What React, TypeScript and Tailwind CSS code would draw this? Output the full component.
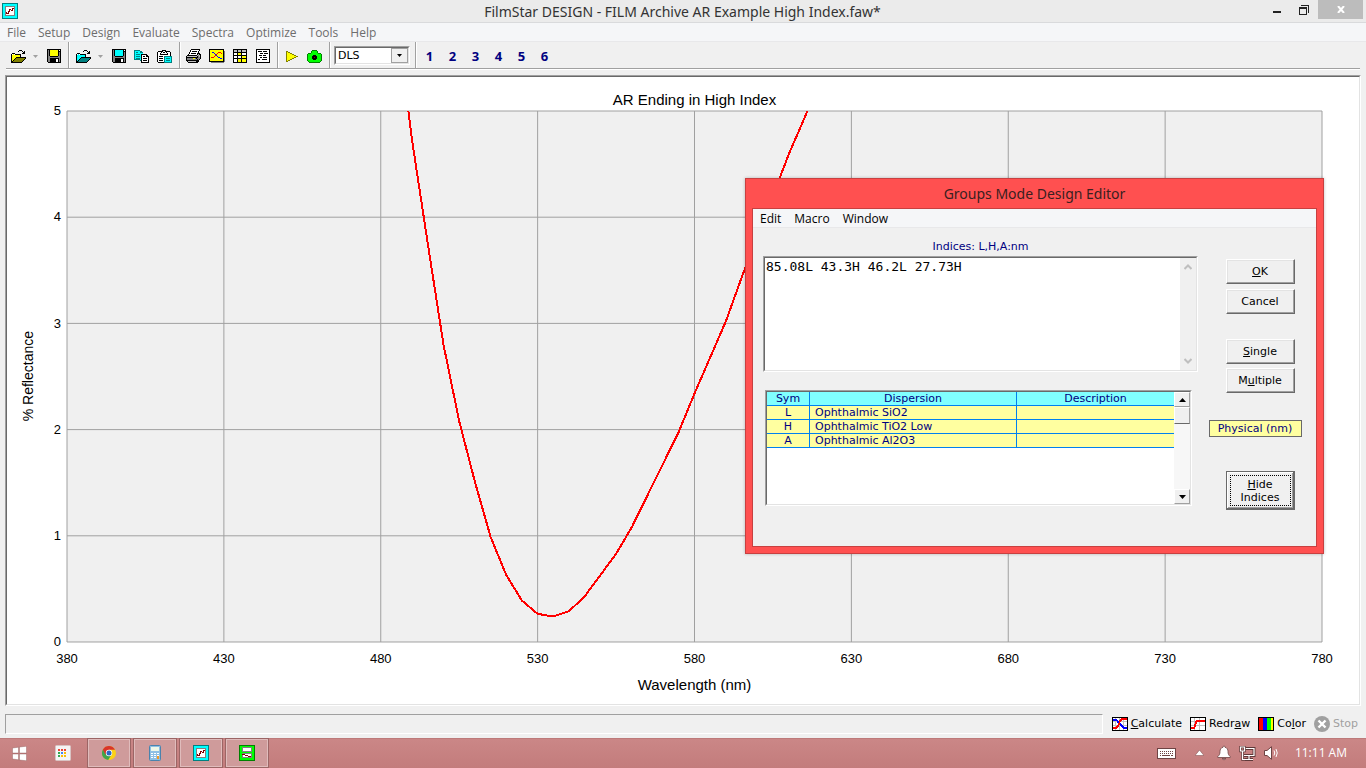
import React from "react";

type Palette = Record<string, string>;

const COLORS: Palette = {
  k: "#000000",
  w: "#ffffff",
  y: "#ffff00",
  d: "#808000",
  g: "#808080",
  l: "#c0c0c0",
  c: "#00ffff",
  t: "#008080",
  G: "#00ff00",
  D: "#008000",
  b: "#0000ff",
  r: "#ff0000",
  m: "#800000",
};

// y = main colour, d = shade of it; the teal set swaps both
const TEAL: Palette = { ...COLORS, y: "#00ffff", d: "#008080" };

const FOLDER = [
  ".........kkk....",
  "........k...k.k.",
  ".............kk.",
  "..kkk.......kkk.",
  ".kwywkkkkkk.....",
  ".kyyyyyyyyk.....",
  ".kyyyyyyyyk.....",
  ".kyyyykkkkkkkkkk",
  ".kyyykdddddddddk",
  ".kyykdddddddddk.",
  ".kykdddddddddk..",
  ".kkdddddddddk...",
  ".kkkkkkkkkkk....",
];

const FLOPPY = [
  "kkkkkkkkkkkkkk",
  "kgkyyyyyyyykwk",
  "kgkyyyyyyyykkk",
  "kgkyyyyyyyykgk",
  "kgkyyyyyyyykgk",
  "kgkyyyyyyyykgk",
  "kgkyyyyyyyykgk",
  "kggkkkkkkkkggk",
  "kggggggggggggk",
  "kggkkkkkkkkkgk",
  "kggkkkkkkwwkgk",
  "kggkkkkkkwwkgk",
  "kggkkkkkkwwkgk",
  ".kkkkkkkkkkkkk",
];

const COPY = [
  "tttttt.........",
  "tccccctt.......",
  "tcttccttt......",
  "tcccccccc......",
  "tcttttckkkkkk..",
  "tcccccckwwwwkk.",
  "tcttttckwkkwkkk",
  "tcccccckwwwwwwk",
  "tcttttckwkkkkwk",
  "ttttttckwwwwwwk",
  "......tkwkkkkwk",
  ".......kwwwwwwk",
  ".......kkkkkkkk",
];

const PASTE = [
  ".....kkkk......",
  ".kkkkkwwkkkkk..",
  "kwwwkwkkwkwwwk.",
  "kwwkwwwwwwkwwk.",
  "kwwkkkkkkkkwwk.",
  "kwwwwwwwwwwwwk.",
  "kwkkkkwtttttttt",
  "kwwwwwwtcccccct",
  "kwkkkkwtcttttct",
  "kwwwwwwtcccccct",
  "kwkkkkwtcttttct",
  "kwwwwwwtcccccct",
  ".kkkkkktttttttt",
];

const PRINTER = [
  ".....kkkkkkkkk.",
  "....kwwwwwwwwk.",
  "....kwkkkkkwk..",
  "...kwwwwwwwwk..",
  "...kwkkkkkwkkk.",
  "..kwwwwwwwwklkk",
  ".kkkkkkkkkklglk",
  "kllllllllllkglk",
  "kkkkkkkkkkkkggk",
  "kggggggyygkgggk",
  "kggggggggggkgk.",
  "kkkkkkkkkkkkk..",
  ".kllllllllkkk..",
  "..kkkkkkkkkk...",
];

const PLOT = [
  "kkkkkkkkkkkkkkk.",
  "kyyyyyyyyyyyyyk.",
  "kyyyyyyyyyyyyykg",
  "kyybbyyyyrrryykg",
  "kyyyybyyryyyrykg",
  "kyyyyybryyyyyykg",
  "kyyyyyrbyyyyyykg",
  "kyyyyryybyyyyykg",
  "kyrrryyyybbyyykg",
  "kyyyyyyyyyybbykg",
  "kyyyyyyyyyyyyykg",
  "kyyyyyyyyyyyyykg",
  "kkkkkkkkkkkkkkkg",
  "..ggggggggggggg.",
];

const GRID = [
  "kkkkkkkkkkkkkk",
  "klllklllkllllk",
  "klllklllkllllk",
  "kkkkkkkkkkkkkk",
  "kwwwkyyykwwwwk",
  "kwwwkyyykwwwwk",
  "kkkkkkkkkkkkkk",
  "kwwwkwwwkyyyyk",
  "kwwwkwwwkyyyyk",
  "kkkkkkkkkkkkkk",
  "kwwwkyyykyyyyk",
  "kwwwkyyykyyyyk",
  "kwwwkyyykyyyyk",
  "kkkkkkkkkkkkkk",
];

const REPORT = [
  "kkkkkkkkkkkkkk",
  "kwwwwwwwwwwwwk",
  "kwkkkkwkkkkwwk",
  "kwwwwwwwwwwwwk",
  "kwwwkkkwkkkkwk",
  "kwwwwwwwwwwwwk",
  "kwwkkkwkkkwwwk",
  "kwwwwwwwwwwwwk",
  "kwwwkkwkkkkwwk",
  "kwwwwwwwwwwwwk",
  "kwkkwwkkkkkwwk",
  "kwwwwwwwwwwwwk",
  "kwwwwwwwwwwwwk",
  "kkkkkkkkkkkkkk",
];

const PLAY = [
  "dd..........",
  "dydd........",
  "dyyydd......",
  "dyyyyydd....",
  "dyyyyyyydd..",
  "dyyyyyyyyydd",
  "dyyyyyyydd..",
  "dyyyyydd....",
  "dyyydd......",
  "dydd........",
  "dd..........",
];

const CAMERA = [
  ".....DDDDD.....",
  "....DGGGGGD....",
  "....DGGGGGD....",
  ".DDDGGGGGGGDDD.",
  "DGGGGGGGGGGGGGD",
  "DGGGGGkkkGGGGGD",
  "DGGGGkkkkkGGGGD",
  "DGGGGkkmkkGGGGD",
  "DGGGGkkkkkGGGGD",
  "DGGGGGkkkGGGGGD",
  "DGGGGGGGGGGGGGD",
  ".DGGGGGGGGGGGD.",
  "..DDDDDDDDDDD..",
];

const APP = [
  "tttttttttttttttt",
  "tcccccccccccccct",
  "tcccccccccccccct",
  "tccggggggggggcct",
  "tccgwwwwwwwwgcct",
  "tccgwwwwwwmmgcct",
  "tccgwwwmmwmwgcct",
  "tccgwwwmwmmwgcct",
  "tccgwwmmwwwwgcct",
  "tccgmwmwwwwwgcct",
  "tccgmmmwwwwwgcct",
  "tccgwwwwwwwwgcct",
  "tccggggggggggcct",
  "tcccccccccccccct",
  "tcccccccccccccct",
  "tttttttttttttttt",
];

const SPLIT_APP = [
  "DDDDDDDDDDDDDDDD",
  "DGGGGGGGGGGGGGGD",
  "DGGggggggggggGGD",
  "DGGgwwwwwwwwgGGD",
  "DGGgwwwwwwwwgGGD",
  "DGGgwwwwwwwwgGGD",
  "DGGggggggggggGGD",
  "DGGGGGGGGGGGGGGD",
  "DGGggggggggggGGD",
  "DGGmmmwwwwwwgGGD",
  "DGGgwwmmmwwwgGGD",
  "DGGgwwwwwmmmgGGD",
  "DGGggggggggggGGD",
  "DGGGGGGGGGGGGGGD",
  "DGGGGGGGGGGGGGGD",
  "DDDDDDDDDDDDDDDD",
];

const CALCULATE = [
  "kkkkkkkkkkkkkkkk",
  "kwwlwwwlwrrrrrrk",
  "kbbbbwwlrrrrrrrk",
  "kbbbbbwrrrwlwwwk",
  "kllllbbrrllllllk",
  "kwwlwbbrwwwlwwwk",
  "kwwlwwrrbwwlwwwk",
  "kwwlwwrrbbwlwwwk",
  "kllllrrlbbbllllk",
  "kwwlrrrlwbbbwwwk",
  "krrrrrwlwwbbbbbk",
  "krrrrwwlwwwbbbbk",
  "kwwlwwwlwwwlwwwk",
  "kkkkkkkkkkkkkkkk",
];

const REDRAW = [
  "kkkkkkkkkkkkkkkk",
  "kwwwlwwwwlwwwwwk",
  "kwwwlwwwwlwwwwwk",
  "kwwwlwrrrrrrrrrk",
  "kllllrrrrrrrrrrk",
  "kwwwlrrwwlwwwwwk",
  "kwwwlrrwwlwwwwwk",
  "kwwwrrwwwlwwwwwk",
  "klllrrlllllllllk",
  "kwwwrrwwwlwwwwwk",
  "krrrrwwwwlwwwwwk",
  "krrrrwwwwlwwwwwk",
  "kwwwlwwwwlwwwwwk",
  "kkkkkkkkkkkkkkkk",
];

const COLOR_BARS = [
  "kkkkkkkkkkkkkkkk",
  ...Array(12).fill("krrrrbbbbGGGGyyk"),
  "kkkkkkkkkkkkkkkk",
];

function PixelIcon({ rows, palette = COLORS }: { rows: string[]; palette?: Palette }) {
  const width = rows[0].length;
  return (
    <svg
      width={width}
      height={rows.length}
      viewBox={`0 0 ${width} ${rows.length}`}
      shapeRendering="crispEdges"
      className="shrink-0"
      aria-hidden="true"
    >
      {rows.flatMap((row, y) =>
        [...row].map((ch, x) =>
          ch === "." ? null : (
            <rect key={`${x}-${y}`} x={x} y={y} width={1} height={1} fill={palette[ch]} />
          )
        )
      )}
    </svg>
  );
}

function Triangle({ up = false, small = false }: { up?: boolean; small?: boolean }) {
  return (
    <svg width={small ? 5 : 7} height={small ? 3 : 4} viewBox="0 0 8 4" preserveAspectRatio="none" aria-hidden="true">
      <path d={up ? "M0 4L4 0L8 4Z" : "M0 0L4 4L8 0Z"} fill="currentColor" />
    </svg>
  );
}

function TitleBar() {
  return (
    <header className="flex h-[23px] items-start border-b border-[#d9dadc] bg-[#ebebeb]">
      <div className="flex flex-1 pl-[2px] pt-[3px]">
        <PixelIcon rows={APP} />
      </div>
      <h1 className="font-['Noto_Sans',sans-serif] text-sm leading-6 text-[#333]">
        FilmStar DESIGN - FILM Archive AR Example High Index.faw*
      </h1>
      <div className="flex flex-1 justify-end pr-[3px]">
        <button aria-label="Minimize" className="flex h-[19px] w-[26px] items-center justify-center">
          <svg width="8" height="6" viewBox="0 0 8 6">
            <path d="M0 4h8v2H0z" fill="#222" />
          </svg>
        </button>
        <button aria-label="Restore" className="flex h-[19px] w-[28px] items-center justify-center">
          <svg width="10" height="10" viewBox="0 0 10 10" shapeRendering="crispEdges">
            <path d="M2 0h8v8H9V1H2zM0 2h8v8H0zM1 4v5h6V4z" fill="#222" fillRule="evenodd" />
          </svg>
        </button>
        <button aria-label="Close" className="flex h-[19px] w-[45px] items-center justify-center bg-[#bcbcbc]">
          <svg width="8" height="7" viewBox="0 0 8 7">
            <path d="M1 0l6 7M7 0L1 7" stroke="#fff" strokeWidth="2" />
          </svg>
        </button>
      </div>
    </header>
  );
}

const MENUS = ["File", "Setup", "Design", "Evaluate", "Spectra", "Optimize", "Tools", "Help"];

function MenuBar() {
  return (
    <nav className="flex h-[19px] items-center gap-3 border-b border-[#e8e8ea] bg-[#f5f6f8] pl-[7px] pt-[2px] text-xs text-[#6d6d6d]">
      {MENUS.map((item) => (
        <button key={item}>{item}</button>
      ))}
    </nav>
  );
}

function ToolButton({ label, children }: { label: string; children: React.ReactNode }) {
  return (
    <button aria-label={label} className="flex h-[26px] w-[23px] items-center justify-center pt-[2px]">
      {children}
    </button>
  );
}

function DropArrow() {
  return (
    <button aria-label="More" className="flex h-[26px] w-[13px] items-center justify-center pt-[2px] text-[#a0a0a0]">
      <Triangle small />
    </button>
  );
}

function Separator() {
  return <div className="ml-[3px] mr-px h-[26px] w-[2px] border-l border-r border-l-[#a0a0a0] border-r-white" />;
}

function Toolbar() {
  return (
    <div className="mx-[6px] flex items-center border-b border-[#a0a0a0] shadow-[0_1px_0_#fff]">
      <ToolButton label="Open">
        <PixelIcon rows={FOLDER} />
      </ToolButton>
      <DropArrow />
      <ToolButton label="Save">
        <PixelIcon rows={FLOPPY} />
      </ToolButton>
      <Separator />
      <ToolButton label="Open index">
        <PixelIcon rows={FOLDER} palette={TEAL} />
      </ToolButton>
      <DropArrow />
      <ToolButton label="Save index">
        <PixelIcon rows={FLOPPY} palette={TEAL} />
      </ToolButton>
      <ToolButton label="Copy">
        <PixelIcon rows={COPY} />
      </ToolButton>
      <ToolButton label="Paste">
        <PixelIcon rows={PASTE} />
      </ToolButton>
      <Separator />
      <ToolButton label="Print">
        <PixelIcon rows={PRINTER} />
      </ToolButton>
      <ToolButton label="Plot">
        <PixelIcon rows={PLOT} />
      </ToolButton>
      <ToolButton label="Table">
        <PixelIcon rows={GRID} />
      </ToolButton>
      <ToolButton label="Report">
        <PixelIcon rows={REPORT} />
      </ToolButton>
      <Separator />
      <ToolButton label="Run">
        <PixelIcon rows={PLAY} />
      </ToolButton>
      <ToolButton label="Capture">
        <PixelIcon rows={CAMERA} />
      </ToolButton>
      <Separator />
      <div className="relative mx-[2px] mt-px h-[19px] w-[76px] border border-b-white border-l-[#a0a0a0] border-r-white border-t-[#a0a0a0]">
        <select
          aria-label="Optimizer"
          className="block h-full w-full appearance-none border border-b-[#e3e3e3] border-l-[#696969] border-r-[#e3e3e3] border-t-[#696969] bg-white pl-[2px] font-['DejaVu_Sans',sans-serif] text-[11px] leading-[15px] text-black"
        >
          <option>DLS</option>
        </select>
        <span className="pointer-events-none absolute right-px top-px flex h-[15px] w-[17px] items-center justify-center border border-[#a0a0a0] bg-[#f0f0f0]">
          <Triangle small />
        </span>
      </div>
      <Separator />
      {[1, 2, 3, 4, 5, 6].map((n) => (
        <button
          key={n}
          className="h-[26px] w-[23px] pt-[2px] font-['Noto_Sans',sans-serif] text-[13px] font-bold leading-none text-[#000080]"
        >
          {n}
        </button>
      ))}
    </div>
  );
}

// [wavelength nm, % reflectance]
const REFLECTANCE = [
  [488.8, 5], [490, 4.72], [495, 3.75], [500, 2.8], [505, 2.08], [510, 1.51], [515, 0.99],
  [520, 0.63], [525, 0.39], [530, 0.265], [535, 0.24], [540, 0.29], [545, 0.43], [550, 0.63],
  [555, 0.83], [560, 1.08], [565, 1.38], [570, 1.68], [575, 1.98], [580, 2.34], [585, 2.68],
  [590, 3.02], [595, 3.43], [600, 3.83], [605, 4.2], [610, 4.59], [615, 4.93], [616, 5],
];

const X_TICKS = [380, 430, 480, 530, 580, 630, 680, 730, 780];
const Y_TICKS = [5, 4, 3, 2, 1, 0];

function Chart() {
  const curve = REFLECTANCE.map(([nm, r]) => `${nm - 380},${5 - r}`).join(" ");
  return (
    <figure className="flex flex-1 flex-col pr-[37px] font-['Liberation_Sans',Arial,sans-serif] text-black">
      <figcaption className="flex h-[34px] items-center justify-center pl-[60px] pt-3 text-[15px]">
        AR Ending in High Index
      </figcaption>
      <div className="flex flex-1">
        <div className="flex w-[42px] items-center justify-center">
          <span className="rotate-180 text-sm [writing-mode:vertical-rl]">% Reflectance</span>
        </div>
        <div className="flex w-[18px] flex-col justify-between pr-[6px] text-[13px]">
          {Y_TICKS.map((tick) => (
            <div key={tick} className="flex h-0 items-center justify-end">
              {tick}
            </div>
          ))}
        </div>
        <div className="flex flex-1 flex-col">
          <svg
            className="block h-0 min-h-full w-full overflow-visible bg-[#f0f0f0]"
            viewBox="0 0 400 5"
            preserveAspectRatio="none"
          >
            <g stroke="#a0a0a0" shapeRendering="crispEdges">
              {X_TICKS.map((nm) => (
                <line key={nm} x1={nm - 380} x2={nm - 380} y1={0} y2={5} vectorEffect="non-scaling-stroke" />
              ))}
              {Y_TICKS.map((r) => (
                <line key={r} x1={0} x2={400} y1={r} y2={r} vectorEffect="non-scaling-stroke" />
              ))}
            </g>
            <polyline
              points={curve}
              fill="none"
              stroke="#ff0000"
              strokeWidth={2}
              shapeRendering="crispEdges"
              vectorEffect="non-scaling-stroke"
            />
          </svg>
        </div>
      </div>
      <div className="flex h-[33px] justify-between pl-[60px] text-[13px]">
        {X_TICKS.map((nm) => (
          <div key={nm} className="flex w-0 items-center justify-center">
            {nm}
          </div>
        ))}
      </div>
      <div className="h-[29px] pl-[60px] text-center text-[15px] leading-5">Wavelength (nm)</div>
    </figure>
  );
}

function DialogButton({ children, className = "" }: { children: React.ReactNode; className?: string }) {
  return (
    <button
      className={`h-[25px] w-[69px] border border-b-[#696969] border-l-white border-r-[#696969] border-t-white bg-[#f0f0f0] pt-[2px] shadow-[inset_-1px_-1px_0_#a0a0a0,inset_1px_1px_0_#e3e3e3] ${className}`}
    >
      {children}
    </button>
  );
}

function ScrollButton({ up = false }: { up?: boolean }) {
  return (
    <button
      aria-label={up ? "Scroll up" : "Scroll down"}
      className="flex h-[15px] w-full items-center justify-center border border-b-[#a0a0a0] border-l-white border-r-[#a0a0a0] border-t-white bg-[#f0f0f0]"
    >
      <Triangle up={up} />
    </button>
  );
}

function Chevron({ up = false }: { up?: boolean }) {
  return (
    <svg width="8" height="6" viewBox="0 0 8 6" aria-hidden="true">
      <path d={up ? "M0.5 5L4 1.5L7.5 5" : "M0.5 1L4 4.5L7.5 1"} fill="none" stroke="#bfbfbf" strokeWidth="2" />
    </svg>
  );
}

const MATERIALS = [
  { sym: "L", dispersion: "Ophthalmic SiO2", description: "" },
  { sym: "H", dispersion: "Ophthalmic TiO2 Low", description: "" },
  { sym: "A", dispersion: "Ophthalmic Al2O3", description: "" },
];

function IndexTable() {
  return (
    <div className="ml-[2px] mt-[18px] flex h-[116px] w-[427px] border border-b-white border-l-[#a0a0a0] border-r-white border-t-[#a0a0a0] bg-white">
      <div className="flex flex-1 border border-b-[#e3e3e3] border-l-[#696969] border-r-[#e3e3e3] border-t-[#696969]">
        <div className="flex-1">
          <table className="w-full table-fixed border-separate border-spacing-0 leading-[13px] text-[#000080]">
            <thead>
              <tr className="h-[14px] bg-[#80ffff]">
                <th className="w-[43px] border-b border-r border-[#0080f0] p-0 font-normal">Sym</th>
                <th className="w-[207px] border-b border-r border-[#0080f0] p-0 font-normal">Dispersion</th>
                <th className="border-b border-[#0080f0] p-0 font-normal">Description</th>
              </tr>
            </thead>
            <tbody>
              {MATERIALS.map((row) => (
                <tr key={row.sym} className="h-[14px] bg-[#ffffa0]">
                  <td className="border-b border-r border-[#0080f0] p-0 text-center">{row.sym}</td>
                  <td className="border-b border-r border-[#0080f0] py-0 pl-[5px] pr-0">{row.dispersion}</td>
                  <td className="border-b border-[#0080f0] p-0">{row.description}</td>
                </tr>
              ))}
            </tbody>
          </table>
        </div>
        <div className="flex w-[16px] flex-col bg-[#f7f7f7]">
          <ScrollButton up />
          <div className="h-[17px] border border-b-[#696969] border-l-white border-r-[#a0a0a0] border-t-white bg-[#f0f0f0]" />
          <div className="flex-1" />
          <ScrollButton />
        </div>
      </div>
    </div>
  );
}

function DesignEditor() {
  return (
    <section
      role="dialog"
      aria-labelledby="editor-title"
      className="absolute right-[42px] top-[178px] flex h-[376px] w-[579px] flex-col border border-[#c84040] bg-[#ff5050] px-[6px] pb-[6px] shadow-[0_0_3px_rgba(0,0,0,0.25)]"
    >
      <h2
        id="editor-title"
        className="h-[29px] text-center font-['Noto_Sans',sans-serif] text-sm leading-[30px] text-[#3a2020]"
      >
        Groups Mode Design Editor
      </h2>
      <div className="flex flex-1 flex-col border border-[#c84040] bg-[#f0f0f0]">
        <nav className="flex h-[19px] items-center gap-[13px] border-b border-[#e8e8ea] bg-[#f5f6f8] pl-[7px] pt-[2px] text-xs text-black">
          <button>Edit</button>
          <button>Macro</button>
          <button>Window</button>
        </nav>
        <div className="flex flex-1 pl-[10px] font-['DejaVu_Sans',Verdana,sans-serif] text-[11px] text-black">
          <div className="w-[435px]">
            <label htmlFor="design" className="block h-[28px] pt-[11px] text-center leading-4 text-[#000080]">
              Indices: L,H,A:nm
            </label>
            <div className="flex h-[116px] border border-b-white border-l-[#a0a0a0] border-r-white border-t-[#a0a0a0]">
              <div className="flex flex-1 border border-b-[#e3e3e3] border-l-[#696969] border-r-[#e3e3e3] border-t-[#696969] bg-white">
                <textarea
                  id="design"
                  spellCheck={false}
                  defaultValue="85.08L 43.3H 46.2L 27.73H"
                  className="flex-1 resize-none overflow-hidden pl-px pt-px font-['DejaVu_Sans_Mono',monospace] text-[13px] leading-4 outline-none"
                />
                <div className="flex w-[16px] flex-col items-center justify-between bg-[#f0f0f0] py-[6px]">
                  <Chevron up />
                  <Chevron />
                </div>
              </div>
            </div>
            <IndexTable />
          </div>
          <div className="flex flex-1 flex-col items-center pl-[6px] pt-[31px]">
            <DialogButton>
              <u>O</u>K
            </DialogButton>
            <DialogButton className="mt-[5px]">Cancel</DialogButton>
            <DialogButton className="mt-[25px]">
              <u>S</u>ingle
            </DialogButton>
            <DialogButton className="mt-[4px]">
              M<u>u</u>ltiple
            </DialogButton>
            <output className="mr-[10px] mt-[27px] h-[17px] w-[93px] border border-[#696969] bg-[#ffffa0] text-center leading-[15px] text-[#000080]">
              Physical (nm)
            </output>
            <button className="mt-[34px] h-[39px] w-[69px] border border-[#696969] bg-[#f0f0f0] p-[3px] leading-[13px] shadow-[inset_-1px_-1px_0_#696969,inset_1px_1px_0_#fff,inset_-2px_-2px_0_#a0a0a0]">
              <span className="flex h-full items-center justify-center border border-dotted border-black">
                <span>
                  <u>H</u>ide
                  <br />
                  Indices
                </span>
              </span>
            </button>
          </div>
        </div>
      </div>
    </section>
  );
}

function StatusBar() {
  return (
    <div className="flex h-[32px] items-center pl-[5px] pr-[8px] font-['DejaVu_Sans',Verdana,sans-serif] text-[11px] text-black">
      <div className="mt-[4px] h-[20px] flex-1 border border-b-white border-l-[#a0a0a0] border-r-white border-t-[#a0a0a0]" />
      <div className="ml-[9px] mt-[4px] flex gap-2">
        <button className="flex items-center gap-[3px]">
          <PixelIcon rows={CALCULATE} />
          <span>
            <u>C</u>alculate
          </span>
        </button>
        <button className="flex items-center gap-[3px]">
          <PixelIcon rows={REDRAW} />
          <span>
            Redr<u>a</u>w
          </span>
        </button>
        <button className="flex items-center gap-[3px]">
          <PixelIcon rows={COLOR_BARS} />
          <span>
            Co<u>l</u>or
          </span>
        </button>
        <button disabled className="flex items-center gap-[3px] text-[#a0a0a0]">
          <svg width="16" height="16" viewBox="0 0 16 16" aria-hidden="true">
            <circle cx="8" cy="8" r="8" fill="#a0a0a0" />
            <path d="M4.5 4.5l7 7M11.5 4.5l-7 7" stroke="#fff" strokeWidth="2.4" />
          </svg>
          <span>Stop</span>
        </button>
      </div>
    </div>
  );
}

function TaskButton({ label, children }: { label: string; children: React.ReactNode }) {
  return (
    <button
      aria-label={label}
      className="flex h-[30px] w-[44px] items-center justify-center border border-[#9c6565] bg-[#cf9b9b] shadow-[inset_0_0_0_1px_#e0bcbc]"
    >
      {children}
    </button>
  );
}

const APP_DOTS = ["#ea4335", "#ea4335", "#ea4335", "#34a853", "#4285f4", "#fbbc05", "#34a853", "#fbbc05", "#fbbc05"];

function Taskbar() {
  return (
    <footer className="flex h-[30px] items-center bg-linear-to-b from-[#cb8787] to-[#c37c7c] shadow-[inset_0_1px_0_#bd7a7a]">
      <button aria-label="Start" className="ml-[12px]">
        <svg width="15" height="15" viewBox="0 0 15 15" fill="#fff" stroke="#8a5555" strokeWidth="0.4">
          <path d="M0.5 2L6.5 1.2V7H0.5zM7.5 1L14.5 0.2V7H7.5zM0.5 8H6.5V13.8L0.5 13zM7.5 8H14.5V14.8L7.5 14z" />
        </svg>
      </button>
      <button aria-label="Apps" className="ml-[28px]">
        <svg width="16" height="16" viewBox="0 0 16 16">
          <rect x="0.5" y="0.5" width="15" height="15" rx="1" fill="#f5f5f5" stroke="#d9c4c4" />
          {APP_DOTS.map((fill, i) => (
            <rect key={i} x={3 + (i % 3) * 3} y={4 + Math.floor(i / 3) * 3} width={2} height={2} fill={fill} />
          ))}
        </svg>
      </button>
      <div className="ml-[16px] flex gap-[2px]">
        <TaskButton label="Chrome">
          <svg width="14" height="14" viewBox="0 0 14 14">
            <circle cx="7" cy="7" r="7" fill="#fbd117" />
            <path d="M7 7L0.9 3.5A7 7 0 0 0 6.2 14L9.6 8.5Z" fill="#3fa54a" />
            <path d="M7 7L3.4 8.4L0.9 3.5A7 7 0 0 1 13.1 3.8H7Z" fill="#d9342b" />
            <circle cx="7" cy="7" r="3.2" fill="#fff" />
            <circle cx="7" cy="7" r="2.5" fill="#2c67c0" />
          </svg>
        </TaskButton>
        <TaskButton label="Calculator">
          <svg width="12" height="16" viewBox="0 0 12 16">
            <rect x="0.5" y="0.5" width="11" height="15" rx="1" fill="#8fc0e4" stroke="#4a83ad" />
            <rect x="2" y="2" width="8" height="4" fill="#eef7e8" />
            <path d="M2 8h2v1H2zM5 8h2v1H5zM8 8h2v1H8zM2 10h2v1H2zM5 10h2v1H5zM8 10h2v1H8zM2 12h2v1H2zM5 12h2v1H5z" fill="#fff" />
            <rect x="8" y="11" width="2" height="3" fill="#f09a28" />
          </svg>
        </TaskButton>
        <TaskButton label="FilmStar DESIGN">
          <PixelIcon rows={APP} />
        </TaskButton>
        <TaskButton label="FilmStar INDEX">
          <PixelIcon rows={SPLIT_APP} />
        </TaskButton>
      </div>
      <div className="flex-1" />
      <div className="flex items-center text-xs text-white">
        <svg width="19" height="11" viewBox="0 0 19 11" shapeRendering="crispEdges">
          <path d="M0 0h19v11H0z" fill="#6e4444" />
          <path d="M1 1h17v9H1z" fill="#fff" />
          <path d="M3 3.5h13M3 5.5h13" stroke="#6e4444" strokeDasharray="1 1" />
          <path d="M3 7.5h1M5 7.5h8M14 7.5h2" stroke="#6e4444" />
        </svg>
        <svg className="ml-[19px]" width="9" height="6" viewBox="0 0 9 6">
          <path d="M0 5.5L4.5 0L9 5.5Z" fill="#fff" stroke="#8a5a5a" strokeWidth="0.6" />
        </svg>
        <svg className="ml-[13px]" width="14" height="16" viewBox="0 0 14 16">
          <path
            d="M7 1C6.2 1 6 1.6 6 2.3C3.8 2.8 3 4.5 3 6.5C3 9 2.4 10 0.8 11.5V12.5H13.2V11.5C11.6 10 11 9 11 6.5C11 4.5 10.2 2.8 8 2.3C8 1.6 7.8 1 7 1ZM5 13.5H9L7 15Z"
            fill="#fff"
            stroke="#6e4444"
            strokeWidth="0.8"
          />
        </svg>
        <svg className="ml-2" width="17" height="15" viewBox="0 0 17 15" fill="none">
          <path d="M5 2.5H15V9.5H5M10 10V13M6 13.5H14" stroke="#5f3a3a" strokeWidth="3" />
          <path d="M5 2.5H15V9.5H5M10 10V13M6 13.5H14" stroke="#fff" strokeWidth="1.2" />
          <path d="M1.5 1H5.5V5H1.5ZM3.5 5V13.5H6" stroke="#5f3a3a" strokeWidth="2.6" />
          <path d="M1.5 1H5.5V5H1.5ZM3.5 5V13.5H6" stroke="#fff" strokeWidth="1.2" />
        </svg>
        <svg className="ml-2" width="15" height="14" viewBox="0 0 15 14">
          <path d="M0.5 4.5H3L7.5 0.7V13.3L3 9.5H0.5Z" fill="#fff" stroke="#6e4444" />
          <path d="M10 4.5Q11.5 7 10 9.5M12 3Q14.5 7 12 11" fill="none" stroke="#fff" />
        </svg>
        <time className="ml-4 mr-[19px]">11:11 AM</time>
      </div>
    </footer>
  );
}

export default function App() {
  return (
    <div className="relative flex min-h-screen flex-col bg-[#f0f0f0] font-['Open_Sans','Noto_Sans',sans-serif]">
      <TitleBar />
      <MenuBar />
      <Toolbar />
      <main className="mx-[5px] mt-[6px] flex flex-1 border border-b-white border-l-[#a0a0a0] border-r-white border-t-[#a0a0a0]">
        <div className="flex flex-1 border border-b-[#e3e3e3] border-l-[#696969] border-r-[#e3e3e3] border-t-[#696969] bg-white">
          <Chart />
        </div>
      </main>
      <StatusBar />
      <Taskbar />
      <DesignEditor />
    </div>
  );
}
